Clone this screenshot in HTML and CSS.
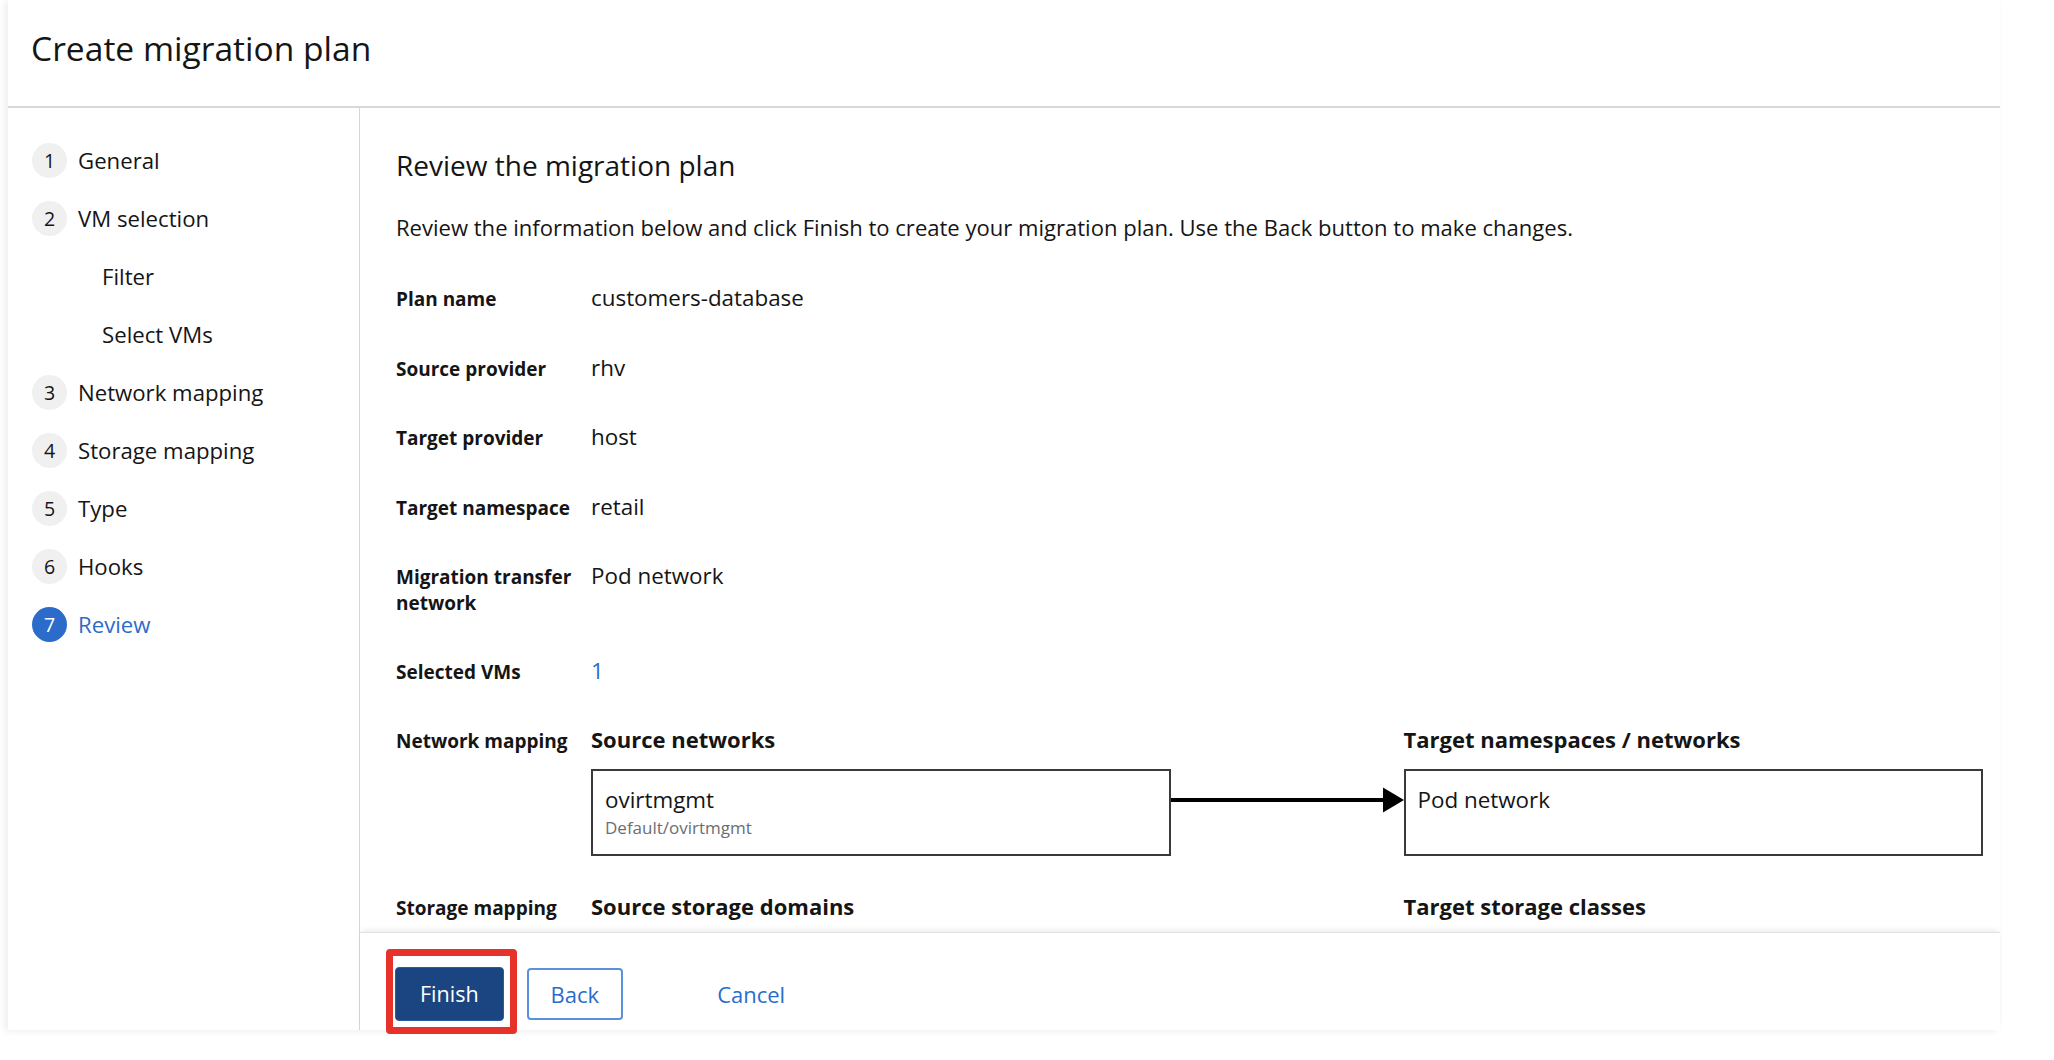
FILE: index.html
```html
<!DOCTYPE html>
<html lang="en">
<head>
<meta charset="utf-8">
<title>Create migration plan</title>
<link rel="stylesheet" href="styles.css">
</head>
<body>
<div class="card">
  <header class="page-header">
    <h1 class="page-title">Create migration plan</h1>
  </header>
  <div class="wizard">
    <nav class="wizard-nav">
      <ol class="nav-list">
        <li class="nav-item"><span class="step">1</span><span class="nav-label">General</span></li>
        <li class="nav-item"><span class="step">2</span><span class="nav-label">VM selection</span></li>
        <li class="nav-item sub"><span class="nav-label">Filter</span></li>
        <li class="nav-item sub"><span class="nav-label">Select VMs</span></li>
        <li class="nav-item"><span class="step">3</span><span class="nav-label">Network mapping</span></li>
        <li class="nav-item"><span class="step">4</span><span class="nav-label">Storage mapping</span></li>
        <li class="nav-item"><span class="step">5</span><span class="nav-label">Type</span></li>
        <li class="nav-item"><span class="step">6</span><span class="nav-label">Hooks</span></li>
        <li class="nav-item current"><span class="step">7</span><span class="nav-label">Review</span></li>
      </ol>
    </nav>
    <section class="wizard-main">
      <div class="wizard-body">
        <h2 class="section-title">Review the migration plan</h2>
        <p class="intro">Review the information below and click Finish to create your migration plan. Use the Back button to make changes.</p>
        <dl class="review-list">
          <dt>Plan name</dt>
          <dd>customers-database</dd>
          <dt>Source provider</dt>
          <dd>rhv</dd>
          <dt>Target provider</dt>
          <dd>host</dd>
          <dt>Target namespace</dt>
          <dd>retail</dd>
          <dt>Migration transfer network</dt>
          <dd>Pod network</dd>
          <dt>Selected VMs</dt>
          <dd><a class="link" href="#">1</a></dd>
          <dt>Network mapping</dt>
          <dd class="mapping mapping-network">
            <div class="map-grid">
              <div class="map-head">Source networks</div>
              <div class="map-spacer"></div>
              <div class="map-head">Target namespaces / networks</div>
              <div class="map-box">
                <div class="map-name">ovirtmgmt</div>
                <div class="map-sub">Default/ovirtmgmt</div>
              </div>
              <div class="map-arrow">
                <svg class="arrow-svg" viewBox="0 0 233 87" preserveAspectRatio="none" aria-hidden="true">
                  <line x1="0" y1="31" x2="214" y2="31" stroke="#000" stroke-width="4"/>
                  <polygon points="212,18.5 233,31 212,43.5" fill="#000"/>
                </svg>
              </div>
              <div class="map-box">
                <div class="map-name">Pod network</div>
              </div>
            </div>
          </dd>
          <dt>Storage mapping</dt>
          <dd class="mapping">
            <div class="map-grid">
              <div class="map-head">Source storage domains</div>
              <div class="map-spacer"></div>
              <div class="map-head">Target storage classes</div>
            </div>
          </dd>
        </dl>
      </div>
      <footer class="wizard-footer">
        <span class="highlight-wrap">
          <button class="btn btn-primary" type="button">Finish</button>
          <span class="highlight"></span>
        </span>
        <button class="btn btn-secondary" type="button">Back</button>
        <button class="btn btn-link" type="button">Cancel</button>
      </footer>
    </section>
  </div>
</div>
</body>
</html>
```

FILE: styles.css
```css
* {
  box-sizing: border-box;
}

html, body {
  margin: 0;
  padding: 0;
  background: #ffffff;
}

body {
  font-family: "Open Sans", "Noto Sans", "Liberation Sans", sans-serif;
  color: #151515;
  width: 2054px;
  height: 1060px;
  overflow: hidden;
}

.card {
  margin-left: 8px;
  width: 1992px;
  height: 1030px;
  background: #ffffff;
  box-shadow: -3px 1px 7px rgba(0, 0, 0, 0.07);
  display: flex;
  flex-direction: column;
}

.page-header {
  height: 108px;
  flex: none;
  padding: 26px 0 0 23px;
  border-bottom: 2px solid #d8d8d8;
}

.page-title {
  margin: 0;
  font-size: 33.6px;
  line-height: 44px;
  font-weight: 400;
  color: #151515;
}

.wizard {
  flex: 1;
  display: flex;
  min-height: 0;
}

.wizard-nav {
  width: 352px;
  flex: none;
  border-right: 1px solid #d6d6d6;
  padding: 35px 0 0 24px;
}

.nav-list {
  list-style: none;
  margin: 0;
  padding: 0;
  display: flex;
  flex-direction: column;
  gap: 23px;
}

.nav-item {
  display: flex;
  align-items: center;
  height: 35px;
  font-size: 22.2px;
  color: #151515;
}

.nav-item.sub {
  padding-left: 70px;
}

.step {
  width: 35px;
  height: 35px;
  border-radius: 50%;
  background: #f0f0f0;
  display: flex;
  align-items: center;
  justify-content: center;
  font-size: 19.6px;
  color: #151515;
  margin-right: 11px;
  flex: none;
}

.nav-item.current .step {
  background: #2b6ccb;
  color: #ffffff;
}

.nav-item.current .nav-label {
  color: #2b6ccb;
}

.wizard-main {
  flex: 1;
  display: flex;
  flex-direction: column;
  min-width: 0;
}

.wizard-body {
  flex: 1;
  overflow: hidden;
  padding: 39px 17px 0 36px;
}

.section-title {
  margin: 0 0 27px;
  font-size: 28px;
  line-height: 36px;
  font-weight: 500;
  color: #151515;
}

.intro {
  margin: 0 0 39px;
  font-size: 22.05px;
  line-height: 34px;
  color: #151515;
}

.review-list {
  margin: 0;
  display: grid;
  grid-template-columns: 195px 1fr;
  row-gap: 39.5px;
  align-items: baseline;
}

.review-list dt {
  font-size: 19px;
  line-height: 26px;
  font-weight: 700;
  padding-right: 14px;
  color: #151515;
}

.review-list dd {
  margin: 0;
  font-size: 22.4px;
  line-height: 30px;
  color: #151515;
}

.review-list .mapping-network {
  margin-bottom: -4px;
}

.link {
  color: #2b6ccb;
  text-decoration: none;
}

.map-grid {
  display: grid;
  grid-template-columns: 1fr 233px 1fr;
  row-gap: 16px;
}

.map-head {
  font-size: 22px;
  line-height: 28px;
  font-weight: 700;
  color: #151515;
}

.map-box {
  border: 2px solid #3a3a3a;
  padding: 14px 12px 13px;
  min-height: 87px;
}

.map-name {
  font-size: 22.4px;
  line-height: 30px;
}

.map-sub {
  font-size: 17px;
  line-height: 26px;
  color: #6a6e73;
}

.map-arrow {
  position: relative;
}

.arrow-svg {
  display: block;
  width: 233px;
  height: 87px;
}

.wizard-footer {
  height: 98px;
  flex: none;
  border-top: 1px solid #e2e2e2;
  box-shadow: 0 -4px 6px -2px rgba(0, 0, 0, 0.08);
  padding: 34px 0 0 35px;
  display: flex;
  align-items: flex-start;
  gap: 23px;
  position: relative;
}

.btn {
  font-family: "Open Sans", "Noto Sans", "Liberation Sans", sans-serif;
  font-size: 22px;
  line-height: 30px;
  border-radius: 4px;
  cursor: pointer;
  background: transparent;
}

.highlight-wrap {
  position: relative;
  display: inline-flex;
}

.btn-primary {
  height: 54px;
  padding: 0 24px;
  background: #1b4581;
  color: #ffffff;
  border: 1px solid #2a5aa0;
  font-size: 21.5px;
}

.highlight {
  position: absolute;
  top: -18px;
  left: -9px;
  right: -13px;
  bottom: -13px;
  border: 7px solid #e63228;
  border-radius: 4px;
  pointer-events: none;
}

.btn-secondary {
  height: 52px;
  margin-top: 1px;
  padding: 0 22px;
  color: #2b6ccb;
  border: 2px solid #5b91dc;
  background: #ffffff;
}

.btn-link {
  height: 52px;
  margin-top: 1px;
  margin-left: 48px;
  padding: 0 23px;
  color: #2b6ccb;
  border: none;
}
```
